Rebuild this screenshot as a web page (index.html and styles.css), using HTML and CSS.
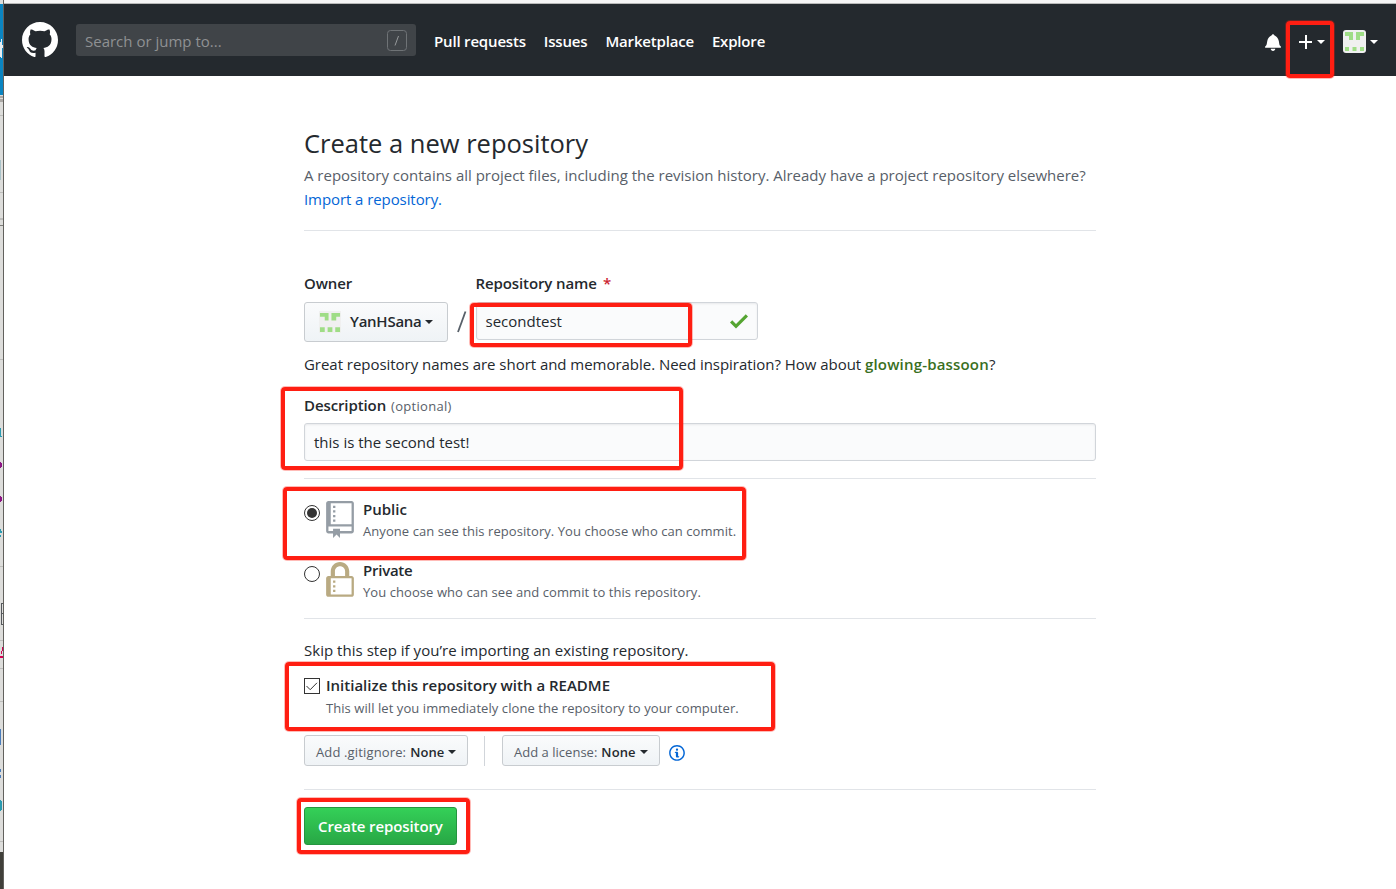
FILE: index.html
```html
<!DOCTYPE html>
<html lang="en">
<head>
<meta charset="utf-8">
<title>Create a new repository</title>
<link rel="stylesheet" href="styles.css">
</head>
<body>
<svg class="backdrop" width="4" height="889" viewBox="0 0 4 889" aria-hidden="true">
  <rect width="4" height="889" fill="#dddddb"/>
  <rect y="4" width="3" height="91" fill="#0a84c1"/>
  <path fill="#e8eef2" d="M0 42h1v15H0zM1 39h1v19H1zM2 45h1v3H2z"/>
  <path fill="#8a8580" d="M0 96h4v2H0zM0 99h4v3H0z" opacity=".6"/>
  <path fill="#bdbdbb" d="M0 115h3v1H0zM0 192h3v1H0zM0 218h3v2H0zM0 359h3v1H0zM0 566h3v1H0zM0 640h3v1H0zM0 668h3v1H0zM0 701h3v1H0zM0 841h3v1H0z"/>
  <path fill="#7d7c79" d="M0 225h4v1H0z"/>
  <path fill="#a9c2c8" d="M0 160h1v20H0z"/>
  <path fill="#2a9ab0" d="M0 428h1v8h1v1H0zM0 529h1v4H0zM1 531h1v2H1zM0 535h1v2H0zM0 800h1v11H0zM1 801h1v9H1z"/>
  <path fill="#8c1484" d="M0 462h1v6H0zM1 463h1v4H1zM0 496h1v6H0zM1 497h1v4H1z"/>
  <path fill="#55585c" d="M1 603h3v1H1zM1 613h3v1H1zM1 624h3v1H1zM1 603h1v22H1z"/>
  <path fill="#d40052" d="M2 647h2v4H2zM1 651h1v3H1zM0 656h3v2H0z"/>
  <path fill="#4a7cba" d="M0 729h1v16H0zM0 769h1v3H0zM0 775h1v3H0z"/>
  <rect y="852" width="4" height="37" fill="#403f3a"/>
  <rect x="3" width="1" height="889" fill="#62615d"/>
</svg>
<div class="window">
  <div class="toolbar-edge"></div>
  <header class="header">
    <svg class="logo" width="36" height="36" viewBox="0 0 16 16"><path d="M8 0C3.58 0 0 3.58 0 8c0 3.54 2.29 6.53 5.47 7.59.4.07.55-.17.55-.38 0-.19-.01-.82-.01-1.49-2.01.37-2.53-.49-2.69-.94-.09-.23-.48-.94-.82-1.13-.28-.15-.68-.52-.01-.53.63-.01 1.08.58 1.23.82.72 1.21 1.87.87 2.33.66.07-.52.28-.87.51-1.07-1.78-.2-3.64-.89-3.64-3.95 0-.87.31-1.59.82-2.15-.08-.2-.36-1.02.08-2.12 0 0 .67-.21 2.2.82.64-.18 1.32-.27 2-.27.68 0 1.36.09 2 .27 1.53-1.04 2.2-.82 2.2-.82.44 1.1.16 1.92.08 2.12.51.56.82 1.27.82 2.15 0 3.07-1.87 3.75-3.65 3.95.29.25.54.73.54 1.48 0 1.07-.01 1.93-.01 2.2 0 .21.15.46.55.38A8.013 8.013 0 0016 8c0-4.42-3.58-8-8-8z"/></svg>
    <div class="search"><span>Search or jump to...</span><svg width="20" height="21" viewBox="0 0 20 21"><rect x=".5" y=".5" width="19" height="20" rx="3"/><path class="key" d="M11.500 6l-3.500 9.500"/></svg></div>
    <nav class="nav"><a>Pull requests</a><a>Issues</a><a>Marketplace</a><a>Explore</a></nav>
    <div class="tools">
      <svg class="bell" width="16" height="18" viewBox="0 0 14 16"><path d="M14 12v1H0v-1l.73-.58c.77-.77.81-2.55 1.19-4.42C2.69 3.23 6 2 6 2c0-.55.45-1 1-1s1 .45 1 1c0 0 3.39 1.23 4.16 5 .38 1.88.42 3.66 1.19 4.42l.66.58H14zm-7 4c1.11 0 2-.89 2-2H5c0 1.11.89 2 2 2z"/></svg>
      <svg class="plus" width="14" height="14" viewBox="0 0 14 14"><path d="M6 0h2v6h5v2H8v6H6V8H0V6h6z"/></svg>
      <i class="caret"></i>
      <svg class="avatar" width="23" height="23" viewBox="0 0 23 23"><rect width="23" height="23" rx="3" fill="#f0f0f0"/><path fill="#9fdd86" d="M2 2h8v8H6V6H2zM13 2h8v4h-4v4h-4zM2 17h4v4H2zM9.500 17h4v4h-4zM17 17h4v4h-4z"/></svg>
      <i class="caret"></i>
    </div>
  </header>
  <main class="content">
    <h1>Create a new repository</h1>
    <p class="lead">A repository contains all project files, including the revision history. Already have a project repository elsewhere?<br><a>Import a repository.</a></p>
    <hr>
    <div class="names">
      <div class="owner">
        <b class="label">Owner</b>
        <button class="btn owner-btn"><svg width="22" height="22" viewBox="0 0 23 23"><rect width="23" height="23" fill="#f0f0f0"/><path fill="#9fdd86" d="M1 2h9v8H6V6H1zM13 2h9v4h-4v4h-5zM1 17h5v5H1zM9 17h5v5H9zM17 17h5v5h-5z"/></svg><b>YanHSana</b><i class="caret"></i></button>
      </div>
      <svg class="slash" width="12" height="22" viewBox="0 0 12 22"><path d="M9.500 .5L2 21"/></svg>
      <div class="repo">
        <div class="label"><b>Repository name</b><b class="star">*</b></div>
        <div class="field repo-field"><span>secondtest</span><svg width="18" height="24" viewBox="0 0 12 16"><path d="M12 5l-8 8-4-4 1.500-1.500L4 10l6.500-6.500L12 5z"/></svg></div>
      </div>
    </div>
    <p class="hint"><span>Great repository names are short and memorable. Need inspiration? How about </span><b>glowing-bassoon</b>?</p>
    <div class="label desc"><b>Description</b><span>(optional)</span></div>
    <div class="field"><span>this is the second test!</span></div>
    <hr class="hr-desc">
    <div class="option">
      <svg class="radio" width="16" height="16" viewBox="0 0 16 16"><circle cx="8" cy="8" r="7.500"/><circle class="dot" cx="8" cy="8" r="5"/></svg>
      <svg class="kind" width="28" height="37" viewBox="0 0 12 16" fill="#959da5"><path d="M4 9H3V8h1v1zm0-3H3v1h1V6zm0-2H3v1h1V4zm0-2H3v1h1V2zm8-1v12c0 .55-.45 1-1 1H6v2l-1.500-1.500L3 16v-2H1c-.55 0-1-.45-1-1V1c0-.55.45-1 1-1h10c.55 0 1 .45 1 1zm-1 10H1v2h2v-1h3v1h5v-2zm0-10H2v9h9V1z"/></svg>
      <div><b>Public</b><small>Anyone can see this repository. You choose who can commit.</small></div>
    </div>
    <div class="option private">
      <svg class="radio" width="16" height="16" viewBox="0 0 16 16"><circle cx="8" cy="8" r="7.500"/></svg>
      <svg class="kind" width="28" height="37" viewBox="0 0 12 16" fill="#b9aa82"><path d="M4 13H3v-1h1v1zm8-6v7c0 .55-.45 1-1 1H1c-.55 0-1-.45-1-1V7c0-.55.45-1 1-1h1V4c0-2.200 1.800-4 4-4s4 1.800 4 4v2h1c.55 0 1 .45 1 1zM3.800 6h4.410V4c0-1.220-.98-2.200-2.200-2.200-1.220 0-2.200.98-2.200 2.200v2H3.800zM11 7H2v7h9V7zM4 8H3v1h1V8zm0 2H3v1h1v-1z"/></svg>
      <div><b>Private</b><small>You choose who can see and commit to this repository.</small></div>
    </div>
    <hr class="hr-vis">
    <p class="skip">Skip this step if you’re importing an existing repository.</p>
    <div class="init">
      <svg class="check" width="16" height="16" viewBox="0 0 16 16"><rect x=".5" y=".5" width="15" height="15"/><path d="M2.500 8l3.700 3.700L13 4.800"/></svg>
      <div><b>Initialize this repository with a README</b><small>This will let you immediately clone the repository to your computer.</small></div>
    </div>
    <div class="extras">
      <button class="btn small git"><span>Add .gitignore:</span><b>None</b><i class="caret"></i></button>
      <span class="divider"></span>
      <button class="btn small lic"><span>Add a license:</span><b>None</b><i class="caret"></i></button>
      <svg class="info" width="16" height="18" viewBox="0 0 14 16"><path d="M6.300 5.690a.942.942 0 01-.28-.7c0-.28.09-.52.28-.7.19-.18.42-.28.7-.28.28 0 .52.09.7.28.18.19.28.42.28.7 0 .28-.09.52-.28.7a1 1 0 01-.7.3c-.28 0-.52-.11-.7-.3zM8 7.990c-.02-.25-.11-.48-.31-.69-.2-.19-.42-.3-.69-.31H6c-.27.02-.48.13-.69.31-.2.2-.3.44-.31.69h1v3c.02.27.11.5.31.69.2.2.42.31.69.31h1c.27 0 .48-.11.69-.31.2-.19.3-.42.31-.69H8V7.980v.01zM7 2.300c-3.140 0-5.700 2.540-5.700 5.680 0 3.140 2.560 5.700 5.700 5.700s5.700-2.550 5.700-5.700c0-3.150-2.560-5.690-5.700-5.690v.01zM7 .98c3.860 0 7 3.140 7 7s-3.140 7-7 7-7-3.120-7-7 3.140-7 7-7z"/></svg>
    </div>
    <hr class="hr-end">
    <button class="btn primary">Create repository</button>
  </main>
</div>
<div class="mark mark-plus"></div>
<div class="mark mark-name"></div>
<div class="mark mark-desc"></div>
<div class="mark mark-public"></div>
<div class="mark mark-init"></div>
<div class="mark mark-create"></div>
</body>
</html>
```
FILE: styles.css
```css
* { box-sizing: border-box; }
body {
  position: relative;
  display: flex;
  width: 1396px;
  height: 889px;
  margin: 0;
  overflow: hidden;
  background: #fff;
  color: #24292e;
  font: 15px/24px "Open Sans", "Noto Sans", sans-serif;
  font-kerning: none;
}
b { font-weight: 600; }
p, h1 { margin: 0; white-space: nowrap; }
span, b, a, small { white-space: pre; }
svg { display: block; flex: none; }
.backdrop { flex: none; }
.window { flex: 1; }
.toolbar-edge { height: 4px; background: #f5f5f5; border-bottom: 1px solid #b9b9b9; }
.header { display: flex; align-items: center; height: 72px; padding: 0 18px; background: #24292e; }
.logo { fill: #fff; }
.search {
  display: flex; align-items: center; justify-content: space-between;
  width: 340px; height: 32px; margin-left: 18px; padding: 2px 9px 0 9px;
  border-radius: 3px; background: #404448; color: #8f9193;
}
.search svg { fill: none; stroke: #6f7376; margin-top: -2px; }
.search .key { stroke: #96999b; }
.nav { display: flex; gap: 18px; margin: 1px 0 0 18px; color: #fff; font-weight: 600; letter-spacing: -.18px; }
.tools { display: flex; align-items: center; margin-left: auto; fill: #fff; color: #fff; }
.tools .caret { margin-top: 3px; }
.caret { width: 0; height: 0; border: 4px solid transparent; border-top-color: currentColor; border-bottom: 0; flex: none; }
.bell { margin: 3px 18px 0 0; }
.plus { margin: 4px 4px 0 0; }
.tools .avatar { margin: 2px 4px 0 18px; }
.content { width: 792px; margin: 49px 0 0 300px; }
h1 { font-size: 25.5px; font-weight: 400; line-height: 36px; }
.lead { margin-top: 2px; color: #586069; letter-spacing: -.01px; }
.lead a { color: #0366d6; letter-spacing: -.08px; }
hr { height: 1px; margin: 19px 0 0; border: 0; background: #e1e4e8; }
.names { display: flex; margin-top: 40px; }
.label { display: block; height: 25px; letter-spacing: -.1px; }
.btn {
  display: flex; align-items: center; height: 40px; padding: 0 14px;
  border: 1px solid #c8ccd0; border-radius: 3px;
  background: linear-gradient(#fafbfc, #eff3f6);
  color: #24292e; font: inherit; white-space: nowrap;
}
.owner-btn { width: 144px; margin-top: 6px; }
.owner-btn b { margin: -2px 3px 0 9px; letter-spacing: -.25px; }
.slash { margin: 40px 7.5px 0 8px; fill: none; stroke: #586069; stroke-width: 1.8; }
.star { margin-left: 6px; color: #cb2431; }
.field {
  display: flex; align-items: center; justify-content: space-between;
  height: 38px; padding: 0 9px; border: 1px solid #d1d5da; border-radius: 3px;
  background: #fafbfc; box-shadow: inset 0 1px 2px rgba(27,31,35,.075);
}
.repo-field { width: 282.5px; margin-top: 6px; }
.repo-field svg { fill: #55a532; }
.hint { margin-top: 10px; }
.hint span { letter-spacing: -.035px; }
.hint b { color: #396f22; letter-spacing: .18px; }
.desc { margin: 17px 0 5px; }
.desc span { margin-left: 5px; color: #586069; font-size: 13px; letter-spacing: .3px; }
.hr-desc { margin-top: 17px; }
.option { display: flex; height: 61px; padding-top: 18px; }
.radio { margin-top: 8px; fill: none; stroke: #333; }
.radio .dot { fill: #333; stroke: none; }
.kind { margin: 4px 9px 0 6px; }
.option b, .init b { display: block; }
.private b { letter-spacing: -.25px; }
small { display: block; color: #586069; font-size: 13px; line-height: 20px; letter-spacing: .07px; }
.hr-vis { margin-top: 17px; }
.skip { margin-top: 19px; letter-spacing: .03px; }
.init { display: flex; margin-top: 11px; }
.init small { margin-top: 1px; }
.check { margin: 5px 6px 0 0; fill: none; stroke: #333; }
.extras { display: flex; align-items: center; height: 31px; margin-top: 17px; }
.small { height: 31px; padding: 2px 11px 0; font-size: 13px; }
.small span { color: #586069; margin-right: 4px; letter-spacing: .14px; }
.small b { margin-right: 4px; letter-spacing: .1px; }
.lic span { letter-spacing: .02px; }
.git { width: 164px; }
.lic { width: 158px; }
.divider { width: 1px; height: 30px; margin: 0 17px 0 16px; background: #d1d5da; }
.info { margin: 5px 0 0 9px; fill: #0366d6; }
.hr-end { margin-top: 23px; }
.primary { width: 153px; height: 38px; margin-top: 17px; padding: 0 13px; border-color: #259540; background: linear-gradient(#34d058, #28a745); color: #fff; font-weight: 600; letter-spacing: -.1px; }
.mark { position: absolute; border: 4px solid #ff1e12; border-radius: 4px; box-shadow: 0 0 0 1px rgba(255,30,18,.3); }
.mark-plus { left: 1286px; top: 21px; width: 48px; height: 57px; }
.mark-name { left: 470px; top: 303px; width: 222px; height: 44px; }
.mark-desc { left: 281px; top: 387px; width: 402px; height: 83px; }
.mark-public { left: 283px; top: 487px; width: 463px; height: 73px; }
.mark-init { left: 285px; top: 662px; width: 490px; height: 69px; }
.mark-create { left: 297px; top: 798px; width: 173px; height: 56px; }
```
